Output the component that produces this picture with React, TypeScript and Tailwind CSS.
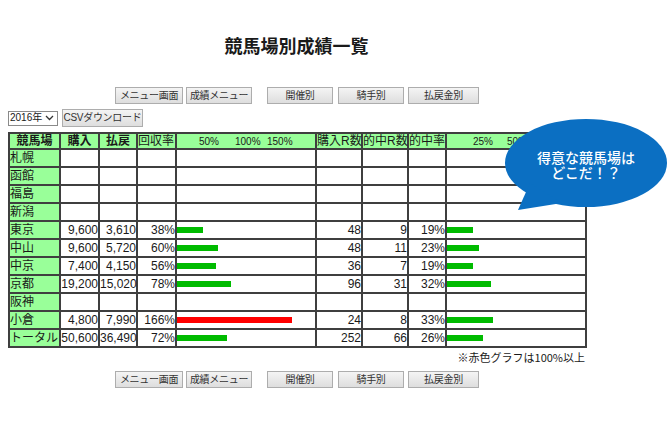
import React from "react";

type Row = {
    name: string;
    buy?: string;
    pay?: string;
    rate?: number;
    races?: number;
    hits?: number;
    hitRate?: number;
};

const rows: Row[] = [
    { name: "札幌" },
    { name: "函館" },
    { name: "福島" },
    { name: "新潟" },
    { name: "東京", buy: "9,600", pay: "3,610", rate: 38, races: 48, hits: 9, hitRate: 19 },
    { name: "中山", buy: "9,600", pay: "5,720", rate: 60, races: 48, hits: 11, hitRate: 23 },
    { name: "中京", buy: "7,400", pay: "4,150", rate: 56, races: 36, hits: 7, hitRate: 19 },
    { name: "京都", buy: "19,200", pay: "15,020", rate: 78, races: 96, hits: 31, hitRate: 32 },
    { name: "阪神" },
    { name: "小倉", buy: "4,800", pay: "7,990", rate: 166, races: 24, hits: 8, hitRate: 33 },
    { name: "トータル", buy: "50,600", pay: "36,490", rate: 72, races: 252, hits: 66, hitRate: 26 },
];

const Btn = ({ label, w, className = "" }: { label: string; w: string; className?: string }) => (
    <button
        className={`${w} h-[17px] border border-[#adadad] bg-linear-to-b from-[#f4f4f4] to-[#dedede] text-[10px] leading-none tracking-[-0.3px] whitespace-nowrap text-[#333] flex items-center justify-center ${className}`}
    >
        {label}
    </button>
);

const ButtonRow = ({ className = "" }: { className?: string }) => (
    <div className={`flex pl-[115px] ${className}`}>
        <Btn label="メニュー画面" w="w-[68px]" />
        <Btn label="成績メニュー" w="w-[66px]" className="ml-[3px]" />
        <Btn label="開催別" w="w-[66px]" className="ml-[15px]" />
        <Btn label="騎手別" w="w-[66px]" className="ml-[5px]" />
        <Btn label="払戻金別" w="w-[71px]" className="ml-[4px]" />
    </div>
);

const cell = "border-2 border-[#3f3f3f] p-0 h-[18px] leading-none";
const head = "border-2 border-[#3f3f3f] p-0 h-[16px] bg-[#99ff99] leading-none";

const Bar = ({ pct, scale, red }: { pct?: number; scale: number; red?: boolean }) =>
    pct === undefined ? null : (
        <div
            className={`h-[6px] ${red ? "bg-[#ff0000]" : "bg-[#00bb00]"}`}
            style={{ width: Math.round(pct * scale) }}
        />
    );

export default function App() {
    return (
        <div className="relative w-[670px] h-[434px] overflow-hidden bg-white text-[#1a1a1a] font-['Liberation_Sans','Noto_Sans_CJK_JP',sans-serif]">
            <div className="w-[593px] flex flex-col">
                <h1 className="mt-[33px] text-center text-[18px] leading-[24px] font-bold font-['Noto_Sans_CJK_JP',sans-serif]">
                    競馬場別成績一覧
                </h1>

                <ButtonRow className="mt-[30px]" />

                <div className="flex items-center pl-[8px] mt-[5px]">
                    <div className="w-[50px] h-[15px] border border-[#8a8a8a] bg-white flex items-center justify-between pl-[1px] pr-[3px] text-[10px] leading-none">
                        <span>2016年</span>
                        <svg width="9" height="6" viewBox="0 0 9 6">
                            <path d="M1 1 L4.5 4.5 L8 1" fill="none" stroke="#333" strokeWidth="1.3" />
                        </svg>
                    </div>
                    <Btn label="CSVダウンロード" w="w-[81px]" className="ml-[4px] h-[18px]" />
                </div>

                <table className="mt-[5px] ml-[8px] w-[577px] table-fixed border-collapse text-[12px]">
                    <colgroup>
                        <col className="w-[51px]" />
                        <col className="w-[39px]" />
                        <col className="w-[38px]" />
                        <col className="w-[39px]" />
                        <col className="w-[140px]" />
                        <col className="w-[46px]" />
                        <col className="w-[46px]" />
                        <col className="w-[38px]" />
                        <col className="w-[140px]" />
                    </colgroup>
                    <thead>
                        <tr>
                            <th className={`${head} font-bold text-center`}>競馬場</th>
                            <th className={`${head} font-bold text-center`}>購入</th>
                            <th className={`${head} font-bold text-center`}>払戻</th>
                            <th className={`${head} font-normal text-left`}>回収率</th>
                            <th className={`${head} font-normal`}>
                                <div className="relative h-[14px] text-[10px]">
                                    <span className="absolute left-[22px] top-[3px]">50%</span>
                                    <span className="absolute left-[58px] top-[3px]">100%</span>
                                    <span className="absolute left-[90px] top-[3px]">150%</span>
                                </div>
                            </th>
                            <th className={`${head} font-normal text-left whitespace-nowrap`}>購入R数</th>
                            <th className={`${head} font-normal text-left whitespace-nowrap`}>的中R数</th>
                            <th className={`${head} font-normal text-left whitespace-nowrap`}>的中率</th>
                            <th className={`${head} font-normal`}>
                                <div className="relative h-[14px] text-[10px]">
                                    <span className="absolute left-[26px] top-[3px]">25%</span>
                                    <span className="absolute left-[60px] top-[3px]">50%</span>
                                </div>
                            </th>
                        </tr>
                    </thead>
                    <tbody>
                        {rows.map((r) => (
                            <tr key={r.name}>
                                <td className={`${cell} bg-[#99ff99] text-left whitespace-nowrap overflow-hidden`}>{r.name}</td>
                                <td className={`${cell} text-right`}>{r.buy}</td>
                                <td className={`${cell} text-right`}>{r.pay}</td>
                                <td className={`${cell} text-right`}>{r.rate !== undefined ? `${r.rate}%` : ""}</td>
                                <td className={cell}>
                                    <Bar pct={r.rate} scale={0.69} red={(r.rate ?? 0) >= 100} />
                                </td>
                                <td className={`${cell} text-right`}>{r.races}</td>
                                <td className={`${cell} text-right`}>{r.hits}</td>
                                <td className={`${cell} text-right`}>{r.hitRate !== undefined ? `${r.hitRate}%` : ""}</td>
                                <td className={cell}>
                                    <Bar pct={r.hitRate} scale={1.38} />
                                </td>
                            </tr>
                        ))}
                    </tbody>
                </table>

                <div className="w-[585px] mt-[2px] text-right text-[11px] leading-[14px] font-['Noto_Sans_CJK_JP',sans-serif]">
                    ※赤色グラフは100%以上
                </div>

                <ButtonRow className="mt-[7px]" />
            </div>

            {/* speech bubble */}
            <div className="absolute left-[500px] top-[115px] w-[172px] h-[100px]">
                <svg width="172" height="100" viewBox="0 0 172 100" className="absolute inset-0">
                    <ellipse cx="86" cy="48" rx="81" ry="44" fill="#0b6fc2" />
                    <path d="M30 68 L18 95 L62 88 Z" fill="#0b6fc2" />
                </svg>
                <div className="absolute left-0 top-[35px] w-[172px] flex flex-col items-center text-white text-[14px] font-medium font-['Noto_Sans_CJK_JP',sans-serif]">
                    <div className="h-[15px] leading-[15px] overflow-visible">得意な競馬場は</div>
                    <div className="h-[15px] leading-[15px] overflow-visible">どこだ！？</div>
                </div>
            </div>
        </div>
    );
}
